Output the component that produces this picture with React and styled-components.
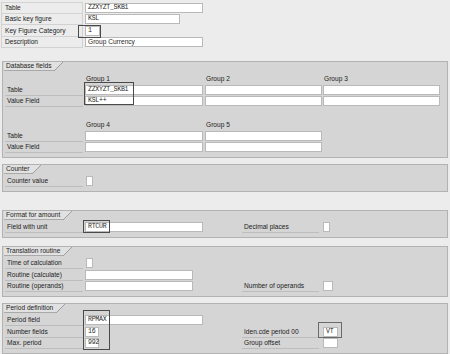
import React from 'react'
import styled, { createGlobalStyle } from 'styled-components'

const ROW = 11.5

const GlobalStyle = createGlobalStyle`
  html, body { margin: 0; padding: 0; background: #ececec; }
  body { font-family: "Liberation Sans", Arial, sans-serif; }
`;

const Page = styled.div`
  position: relative;
  width: 450px;
  height: 354px;
  overflow: hidden;
  box-sizing: border-box;
  padding-top: 2px;
  background: #ececec;
  color: #1c1c1c;
  font-size: 6.6px;
`;

const TopRow = styled.div`
  display: grid;
  grid-template-columns: 84px 120px;
  height: ${ROW}px;
  padding-left: 1px;
  align-items: center;
`;

const TopLabel = styled.div`
  height: 100%;
  margin-right: 2px;
  padding-left: 3px;
  box-sizing: border-box;
  display: flex;
  align-items: center;
  white-space: nowrap;
  border: 1px solid #d2d2d2;
  border-top: ${p => (p.$first ? '1px solid #d2d2d2' : 'none')};
`;

const Box = styled.section`
  margin: ${p => p.$mt}px 2px 0;
  background: #d5d5d5;
  border: 1px solid #b2b2b2;
  padding: 0 0 4px 2px;
`;

const Tab = styled.div`
  display: flex;
  height: 9px;
  margin-left: -1px;
  margin-bottom: 1.5px;
`;

const TabText = styled.div`
  background: #e1e1e1;
  border-bottom: 1px solid #a9a9a9;
  padding: 0 3px 0 2px;
  line-height: 8px;
  white-space: nowrap;
`;

const TabSlant = styled.div`
  width: 9px;
  background: linear-gradient(
    to bottom right,
    #e1e1e1 calc(50% - 0.6px),
    #9c9c9c 50%,
    transparent calc(50% + 0.6px)
  );
`;

const Row = styled.div`
  display: grid;
  grid-template-columns: 80px 120px 37px 81px 118px;
  height: ${ROW}px;
  align-items: center;
`;

const Label = styled.div`
  grid-column: ${p => p.$col || 1};
  height: 100%;
  margin-right: ${p => (p.$col === 4 ? 4 : 2)}px;
  padding-left: 2px;
  box-sizing: border-box;
  display: flex;
  align-items: center;
  white-space: nowrap;
  border-bottom: 1px solid #bdbdbd;
`;

const Head = styled.div`
  grid-column: ${p => p.$col};
  padding-left: 1px;
  white-space: nowrap;
`;

const Field = styled.div`
  grid-column: ${p => p.$col || 2};
  width: ${p => p.$w}px;
  height: 10px;
  margin-left: ${p => p.$ml || 0}px;
  box-sizing: border-box;
  background: #fff;
  border: 1px solid #b9b9b9;
  padding-left: 2px;
  line-height: 7.5px;
  white-space: nowrap;
  color: #2a2a2a;
  font-family: ${p => (p.$sans ? '"Liberation Sans", Arial, sans-serif' : '"Liberation Mono", "DejaVu Sans Mono", monospace')};
  font-size: ${p => (p.$sans ? 6.6 : 6.6)}px;
  letter-spacing: ${p => (p.$sans ? 0 : -0.3)}px;
`;

const Frame = styled.div`
  position: absolute;
  left: ${p => p.$x}px;
  top: ${p => p.$y}px;
  width: ${p => p.$w}px;
  height: ${p => p.$h}px;
  box-sizing: border-box;
  border: 1px solid ${p => p.$c || '#4a4a4a'};
  pointer-events: none;
`;

function Group({ title, mt, children }) {
  return (
    <Box $mt={mt}>
      <Tab>
        <TabText>{title}</TabText>
        <TabSlant />
      </Tab>
      {children}
    </Box>
  )
}

export default function App() {
  return (
    <>
      <GlobalStyle />
      <Page>
        <TopRow>
          <TopLabel $first>Table</TopLabel>
          <Field $w={118}>ZZXYZT_SKB1</Field>
        </TopRow>
        <TopRow>
          <TopLabel>Basic key figure</TopLabel>
          <Field $w={95}>KSL</Field>
        </TopRow>
        <TopRow>
          <TopLabel>Key Figure Category</TopLabel>
          <Field $w={15}>1</Field>
        </TopRow>
        <TopRow>
          <TopLabel>Description</TopLabel>
          <Field $w={118} $sans>Group Currency</Field>
        </TopRow>

        <Group title="Database fields" mt={13}>
          <Row>
            <Head $col={2}>Group 1</Head>
            <Head $col={3}>Group 2</Head>
            <Head $col={5}>Group 3</Head>
          </Row>
          <Row>
            <Label>Table</Label>
            <Field $w={118}>ZZXYZT_SKB1</Field>
            <Field $col="3 / 5" $w={117} />
            <Field $col={5} $w={117} />
          </Row>
          <Row>
            <Label>Value Field</Label>
            <Field $w={118}>KSL++</Field>
            <Field $col="3 / 5" $w={117} />
            <Field $col={5} $w={117} />
          </Row>
          <Row />
          <Row>
            <Head $col={2}>Group 4</Head>
            <Head $col={3}>Group 5</Head>
          </Row>
          <Row>
            <Label>Table</Label>
            <Field $w={118} />
            <Field $col="3 / 5" $w={117} />
          </Row>
          <Row>
            <Label>Value Field</Label>
            <Field $w={118} />
            <Field $col="3 / 5" $w={117} />
          </Row>
        </Group>

        <Group title="Counter" mt={6}>
          <Row>
            <Label>Counter value</Label>
            <Field $w={7} $ml={1} />
          </Row>
        </Group>

        <Group title="Format for amount" mt={18}>
          <Row>
            <Label>Field with unit</Label>
            <Field $w={118}>RTCUR</Field>
            <Label $col={4}>Decimal places</Label>
            <Field $col={5} $w={7} />
          </Row>
        </Group>

        <Group title="Translation routine" mt={8}>
          <Row>
            <Label>Time of calculation</Label>
            <Field $w={7} $ml={1} />
          </Row>
          <Row>
            <Label>Routine (calculate)</Label>
            <Field $w={108} />
          </Row>
          <Row>
            <Label>Routine (operands)</Label>
            <Field $w={108} />
            <Label $col={4}>Number of operands</Label>
            <Field $col={5} $w={10} />
          </Row>
        </Group>

        <Group title="Period definition" mt={6}>
          <Row>
            <Label>Period field</Label>
            <Field $w={118}>RPMAX</Field>
          </Row>
          <Row>
            <Label>Number fields</Label>
            <Field $w={14}>16</Field>
            <Label $col={4}>Iden.cde period 00</Label>
            <Field $col={5} $w={15}>VT</Field>
          </Row>
          <Row>
            <Label>Max. period</Label>
            <Field $w={14}>992</Field>
            <Label $col={4}>Group offset</Label>
            <Field $col={5} $w={15} />
          </Row>
        </Group>

        <Frame $x={78} $y={25} $w={23} $h={13} />
        <Frame $x={84} $y={82} $w={50} $h={23} />
        <Frame $x={83} $y={220} $w={27} $h={13} />
        <Frame $x={83} $y={310} $w={27} $h={40} />
        <Frame $x={318} $y={322} $w={24} $h={16} $c="#6a6a6a" />
      </Page>
    </>
  )
}
